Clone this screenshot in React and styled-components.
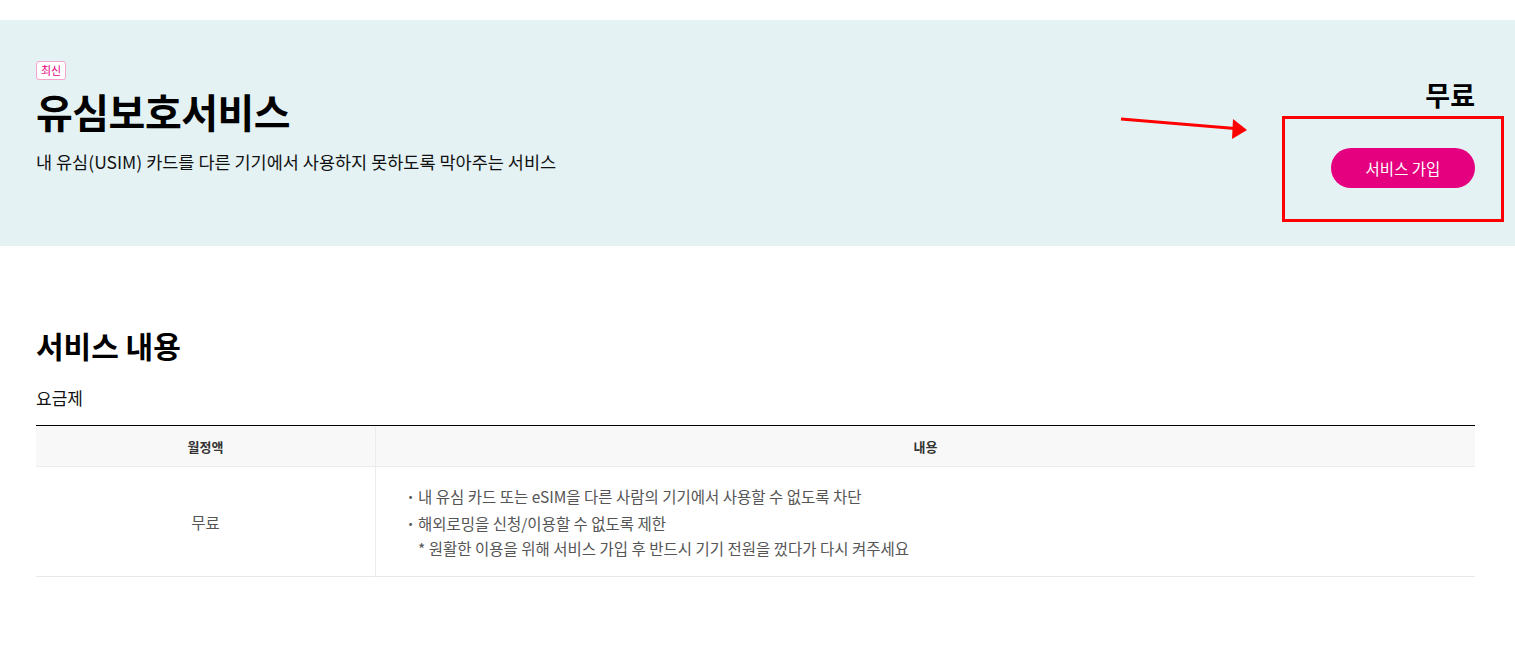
import React from "react";
import styled, { createGlobalStyle } from "styled-components";

const GlobalStyle = createGlobalStyle`
  * {
    box-sizing: border-box;
  }
  body {
    margin: 0;
    background: #fff;
    font-family: "Noto Sans CJK KR", "Noto Sans", sans-serif;
    color: #111;
  }
`;

const Page = styled.div`
  padding-top: 20px;
`;

const Banner = styled.section`
  background-color: #e4f2f4;
  padding: 41px 40px 0 36px;
  height: 226px;
  display: flex;
  justify-content: space-between;
  align-items: flex-start;
`;

const Intro = styled.div`
  display: flex;
  flex-direction: column;
  align-items: flex-start;
`;

const Badge = styled.span`
  display: inline-block;
  height: 19px;
  padding: 0 4px;
  border: 1px solid #f6a3cb;
  border-radius: 3px;
  background: #fff;
  color: #e4007f;
  font-size: 11px;
  line-height: 17px;
`;

const Title = styled.h1`
  margin: 6px 0 0;
  font-size: 40px;
  line-height: 50px;
  font-weight: 700;
  letter-spacing: -0.5px;
  color: #000;
`;

const Description = styled.p`
  margin: 13px 0 0;
  font-size: 17.5px;
  line-height: 26px;
  color: #111;
`;

const Aside = styled.div`
  position: relative;
  display: flex;
  flex-direction: column;
  align-items: flex-end;
  padding-top: 17px;
`;

const Price = styled.strong`
  font-size: 27px;
  line-height: 34px;
  font-weight: 700;
  color: #000;
`;

const JoinButton = styled.button`
  margin-top: 36px;
  width: 144px;
  height: 40px;
  border: none;
  border-radius: 20px;
  background-color: #e4007f;
  color: #fff;
  font-family: inherit;
  font-size: 15.5px;
  cursor: pointer;
`;

/* screenshot annotation drawn over the banner */
const Highlight = styled.div`
  position: absolute;
  top: 55px;
  right: -29px;
  width: 222px;
  height: 106px;
  border: 3px solid #ff0000;
  pointer-events: none;
`;

const Arrow = styled.svg`
  position: absolute;
  top: 56px;
  right: 226px;
  width: 130px;
  height: 24px;
  pointer-events: none;
`;

const Content = styled.section`
  padding: 79px 40px 0 36px;
`;

const SectionTitle = styled.h2`
  margin: 0;
  font-size: 30px;
  line-height: 40px;
  font-weight: 700;
  color: #000;
`;

const SubTitle = styled.h3`
  margin: 20px 0 0;
  font-size: 17px;
  line-height: 26px;
  font-weight: 400;
  color: #111;
`;

const Table = styled.div`
  margin-top: 14px;
  border-top: 1px solid #000;
  display: grid;
  grid-template-columns: 339px 1fr;
`;

const HeadCell = styled.div`
  height: 41px;
  display: flex;
  align-items: center;
  justify-content: center;
  background: #f8f8f8;
  border-bottom: 1px solid #ececec;
  border-left: ${(p) => (p.first ? "none" : "1px solid #ececec")};
  font-size: 13px;
  font-weight: 700;
  color: #333;
`;

const Cell = styled.div`
  display: flex;
  align-items: center;
  justify-content: ${(p) => (p.center ? "center" : "flex-start")};
  padding: ${(p) => (p.center ? "0" : "17px 30px 15px")};
  border-bottom: 1px solid #e8e8e8;
  border-left: ${(p) => (p.center ? "none" : "1px solid #ececec")};
  font-size: 15.5px;
  color: #555;
`;

const List = styled.ul`
  margin: 0;
  padding: 0 0 0 12px;
  list-style: none;
`;

const Item = styled.li`
  font-size: 15.5px;
  line-height: 25px;
  color: #555;

  & + & {
    margin-top: 2px;
  }

  &::before {
    content: "·";
    display: inline-block;
    width: 12px;
    margin-left: -12px;
    font-weight: 700;
  }
`;

const Note = styled.span`
  display: block;
`;

const App = () => {
  return (
    <Page>
      <GlobalStyle />
      <Banner>
        <Intro>
          <Badge>최신</Badge>
          <Title>유심보호서비스</Title>
          <Description>
            내 유심(USIM) 카드를 다른 기기에서 사용하지 못하도록 막아주는 서비스
          </Description>
        </Intro>
        <Aside>
          <Price>무료</Price>
          <JoinButton>서비스 가입</JoinButton>
          <Arrow viewBox="0 0 130 24">
            <line x1="2" y1="2" x2="116" y2="11.5" stroke="#ff0000" strokeWidth="3" />
            <polygon points="114,2 128,13 113,22" fill="#ff0000" />
          </Arrow>
          <Highlight />
        </Aside>
      </Banner>

      <Content>
        <SectionTitle>서비스 내용</SectionTitle>
        <SubTitle>요금제</SubTitle>
        <Table>
          <HeadCell first>월정액</HeadCell>
          <HeadCell>내용</HeadCell>
          <Cell center>무료</Cell>
          <Cell>
            <List>
              <Item>내 유심 카드 또는 eSIM을 다른 사람의 기기에서 사용할 수 없도록 차단</Item>
              <Item>
                해외로밍을 신청/이용할 수 없도록 제한
                <Note>* 원활한 이용을 위해 서비스 가입 후 반드시 기기 전원을 껐다가 다시 켜주세요</Note>
              </Item>
            </List>
          </Cell>
        </Table>
      </Content>
    </Page>
  );
};

export default App;
